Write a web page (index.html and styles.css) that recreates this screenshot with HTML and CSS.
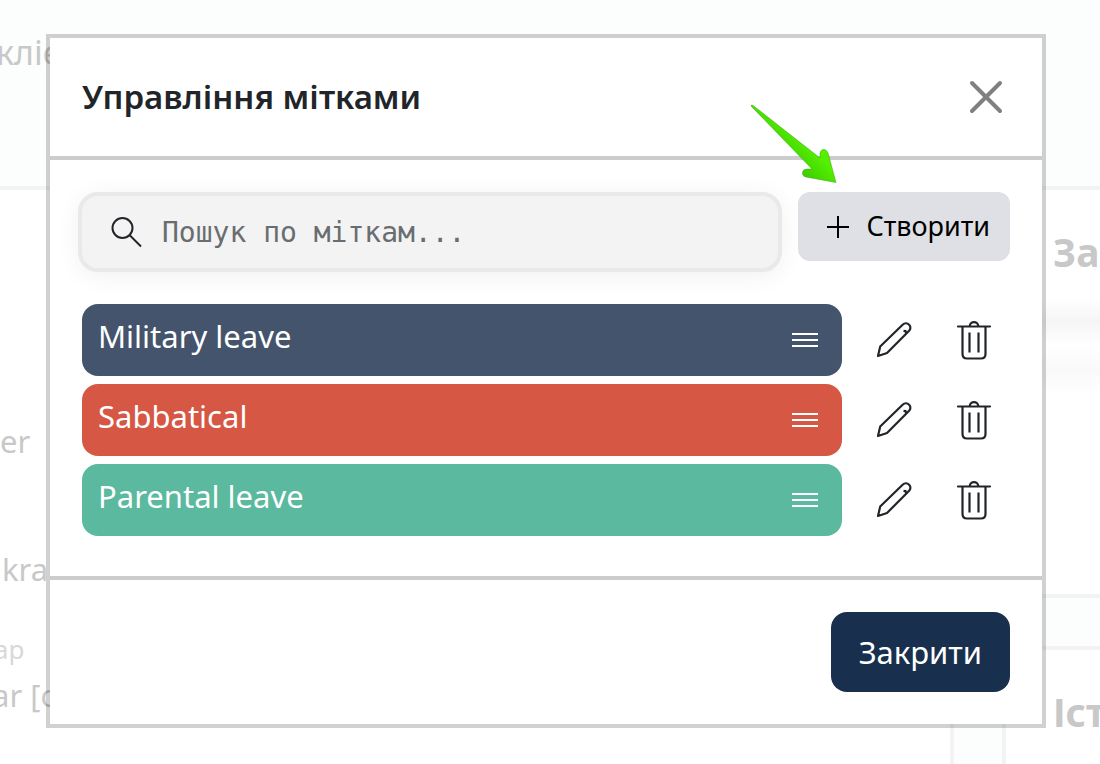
FILE: index.html
```html
<!DOCTYPE html>
<html lang="uk">
<head>
<meta charset="utf-8">
<meta name="viewport" content="width=device-width, initial-scale=1">
<title>Управління мітками</title>
<link rel="stylesheet" href="styles.css">
</head>
<body>
<svg class="sprite" aria-hidden="true">
  <symbol id="grip" viewBox="0 0 28 20"><path d="M1 4h26M1 10h26M1 16h26" stroke="currentColor" stroke-width="2" fill="none"/></symbol>
  <symbol id="pencil" viewBox="0 0 40 40"><g fill="none" stroke="currentColor" stroke-width="2.200" stroke-linejoin="round"><path d="M4 36l2.200-9.500L28.600 4.800c2-1.900 4.800-1.800 6.500-.1 1.800 1.800 1.700 4.500-.2 6.300L13 33 4 36z"/><path d="M29.500 10.800l2.200.4.400 2.500"/></g></symbol>
  <symbol id="trash" viewBox="0 0 40 40"><g fill="none" stroke="currentColor" stroke-width="2.200"><path d="M4 6.500h32M8.500 7v27q0 4.500 4.500 4.500h14q4.500 0 4.500-4.500V7" stroke-linecap="round"/><path d="M15.800 6c0-5.200 8.400-5.200 8.400 0M15.500 12.500v20M24.500 12.500v20"/></g></symbol>
</svg>

<div class="page" aria-hidden="true">
  <div class="page-head">клієнт</div>
  <div class="page-body">
    <div class="panel main-panel">
      <p class="line line-first">er</p>
      <p class="line line-second">kra</p>
      <p class="line line-small">ар</p>
      <p class="line line-last">ar [c</p>
    </div>
    <div class="side">
      <div class="panel side-panel"><h2 class="side-title">За</h2><div class="haze"></div><div class="haze haze-light"></div></div>
      <div class="panel side-panel side-rest"><h2 class="side-title">Іст</h2></div>
    </div>
  </div>
</div>

<div class="overlay">
  <section class="modal" role="dialog" aria-modal="true" aria-labelledby="title">
    <header class="modal-header">
      <h1 class="modal-title" id="title">Управління мітками</h1>
      <button class="icon-button" type="button" aria-label="Закрити вікно">
        <svg class="close-icon" viewBox="0 0 36 36"><path d="M4 4l28 28M32 4L4 32" stroke="currentColor" stroke-width="4" stroke-linecap="round"/></svg>
      </button>
    </header>
    <div class="modal-body">
      <div class="toolbar">
        <label class="search">
          <svg class="search-icon" viewBox="0 0 32 32"><g fill="none" stroke="currentColor" stroke-width="2"><circle cx="12.500" cy="12" r="10"/><path d="M19.500 19l11.500 11.500"/></g></svg>
          <input class="search-input" type="text" aria-label="Пошук по міткам" placeholder="Пошук по міткам...">
        </label>
        <div class="create-wrap">
          <button class="create" type="button">
            <svg class="plus-icon" viewBox="0 0 24 24"><path d="M12 2v22M1 13h22" stroke="currentColor" stroke-width="2"/></svg>
            Створити
          </button>
          <svg class="pointer" viewBox="0 0 90 84" aria-hidden="true">
            <defs><linearGradient id="green" x1="45" y1="60" x2="62" y2="43" gradientUnits="userSpaceOnUse"><stop offset="0" stop-color="#3fd000"/><stop offset="1" stop-color="#55f000"/></linearGradient></defs>
            <path d="M2 2Q2 .6 4 1.400L71 54 71 49Q72 45 75.500 45.500 78 46 79 49L87 78.500 57 73Q53 72 53.500 68.500 54 65 58 65L63 65z" fill="url(#green)" stroke="#2d9a00" stroke-width="1" stroke-opacity=".45" stroke-linejoin="round"/>
          </svg>
        </div>
      </div>
      <ul class="tags">
        <li class="tag-row">
          <div class="tag tag-blue"><span>Military leave</span><svg class="grip"><use href="#grip"/></svg></div>
          <button class="icon-button" type="button" aria-label="Редагувати Military leave"><svg class="action-icon"><use href="#pencil"/></svg></button>
          <button class="icon-button" type="button" aria-label="Видалити Military leave"><svg class="action-icon"><use href="#trash"/></svg></button>
        </li>
        <li class="tag-row">
          <div class="tag tag-red"><span>Sabbatical</span><svg class="grip"><use href="#grip"/></svg></div>
          <button class="icon-button" type="button" aria-label="Редагувати Sabbatical"><svg class="action-icon"><use href="#pencil"/></svg></button>
          <button class="icon-button" type="button" aria-label="Видалити Sabbatical"><svg class="action-icon"><use href="#trash"/></svg></button>
        </li>
        <li class="tag-row">
          <div class="tag tag-green"><span>Parental leave</span><svg class="grip"><use href="#grip"/></svg></div>
          <button class="icon-button" type="button" aria-label="Редагувати Parental leave"><svg class="action-icon"><use href="#pencil"/></svg></button>
          <button class="icon-button" type="button" aria-label="Видалити Parental leave"><svg class="action-icon"><use href="#trash"/></svg></button>
        </li>
      </ul>
    </div>
    <footer class="modal-footer">
      <button class="dismiss" type="button">Закрити</button>
    </footer>
  </section>
</div>
</body>
</html>
```

FILE: styles.css
```css
* { box-sizing: border-box; }
body {
  margin: 0;
  min-height: 100vh;
  display: grid;
  overflow: hidden;
  background: #fcfefe;
  color: #212529;
  font-family: "Noto Sans", sans-serif;
}
button, input { font: inherit; color: inherit; }
button { cursor: pointer; }
svg { display: block; flex: none; }
.sprite { position: absolute; width: 0; height: 0; }

/* Faded page under the dialog */
.page, .overlay { grid-area: 1 / 1; min-width: 0; }
.page {
  display: flex;
  flex-direction: column;
  height: 100vh;
  overflow: hidden;
  color: #c8c8c8;
}
.page-head { height: 186px; margin-left: -4px; padding-top: 32px; font-size: 34px; line-height: 40px; }
.page-body {
  flex: 1;
  display: grid;
  grid-template-columns: 1fr 98px;
  gap: 48px;
}
.panel { background: #fff; border: 4px solid #f3f3f3; }
.main-panel { border-left: 0; border-bottom: 0; overflow: hidden; }
.line { margin: 0; font-size: 31px; line-height: 40px; white-space: nowrap; }
.line-first { padding-top: 231px; }
.line-second { padding: 88px 0 0 2px; }
.line-small { margin: 42px 0 0 -6px; font-size: 26px; line-height: 36px; color: #d8d8d8; }
.line-last { margin: 8px 0 0 -8px; }
.side { display: flex; flex-direction: column; gap: 48px; overflow: hidden; }
.side-panel { flex: none; height: 412px; border-right: 0; padding: 34px 0 0 47px; }
.side-rest { flex: 1; border-bottom: 0; }
.side-title { margin: 0; font-size: 39px; line-height: 56px; white-space: nowrap; }
.haze { height: 48px; margin: 18px 0 0 -16px; background: linear-gradient(#fff, #f5f5f5, #fff); }
.haze-light { margin-top: 0; background: linear-gradient(#fff, #f9f9f9, #fff); }

/* Dialog */
.overlay { position: relative; padding: 34px 54px 36px 46px; }
.modal {
  background: #fff;
  background-clip: padding-box;
  border: 4px solid rgba(0, 0, 0, .18);
}
.modal-header {
  display: flex;
  align-items: center;
  justify-content: space-between;
  padding: 32px 38px 32px 32px;
  border-bottom: 4px solid #ccc;
}
.modal-title { margin: 0; font-size: 33px; font-weight: 600; line-height: 54px; }
.icon-button {
  display: flex;
  align-items: center;
  justify-content: center;
  padding: 0;
  border: 0;
  background: none;
}
.close-icon { width: 36px; height: 36px; color: #808080; }
.modal-body { padding: 32px 32px 40px; }
.toolbar { display: flex; align-items: flex-start; gap: 16px; margin-left: -4px; }
.search {
  flex: 1;
  min-width: 0;
  height: 80px;
  display: flex;
  align-items: center;
  gap: 20px;
  padding: 0 28px;
  background: #f3f3f3;
  border: 4px solid #e9e9e9;
  border-radius: 20px;
  box-shadow: 0 4px 24px rgba(0, 0, 0, .06);
}
.search-icon { width: 32px; height: 32px; }
.search-input {
  flex: 1;
  min-width: 0;
  padding: 0;
  border: 0;
  outline: 0;
  background: none;
  font-family: "DejaVu Sans Mono", monospace;
  font-size: 28px;
}
.search-input::placeholder { color: #6a6d70; opacity: 1; }
.create-wrap { position: relative; }
.create {
  display: flex;
  align-items: center;
  gap: 16px;
  height: 69px;
  padding: 0 20px 2px 28px;
  border: 0;
  border-radius: 12px;
  background: #dfe0e5;
  color: #000;
  font-size: 27px;
}
.plus-icon { width: 24px; height: 24px; }
.pointer { position: absolute; left: -49px; top: -88px; width: 90px; height: 84px; pointer-events: none; }

.tags { display: grid; gap: 8px; margin: 32px 0 0; padding: 0; list-style: none; }
.tag-row { display: grid; grid-template-columns: 1fr 104px 64px; align-items: center; }
.tag-row .icon-button:last-child { padding-right: 8px; }
.tag {
  display: flex;
  justify-content: space-between;
  padding: 8px 23px 16px 16px;
  border-radius: 16px;
  color: #fff;
  font-size: 31px;
  line-height: 48px;
}
.tag-blue { background: #43546c; }
.tag-red { background: #d55744; }
.tag-green { background: #5ab99e; }
.grip { width: 28px; height: 20px; margin-top: 18px; }
.action-icon { width: 40px; height: 40px; }

.modal-footer {
  display: flex;
  justify-content: flex-end;
  padding: 32px;
  border-top: 4px solid #ccc;
}
.dismiss {
  height: 80px;
  padding: 0 28px;
  border: 0;
  border-radius: 16px;
  background: #182f4d;
  color: #fff;
  font-size: 31px;
}
```
